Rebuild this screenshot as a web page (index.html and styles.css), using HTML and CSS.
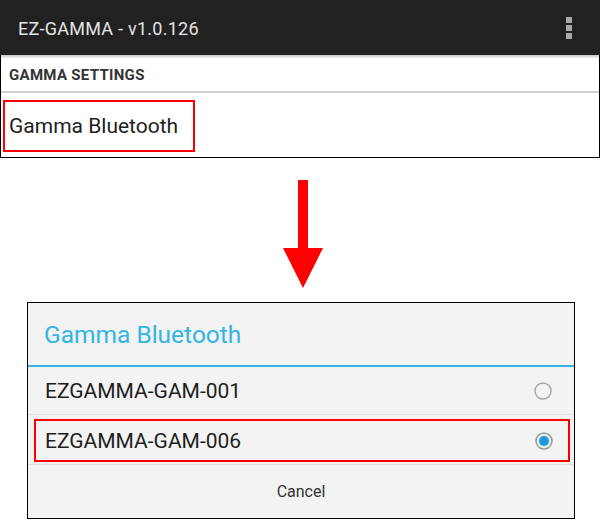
FILE: index.html
```html
<!DOCTYPE html>
<html>
<head>
<meta charset="utf-8">
<link rel="stylesheet" href="styles.css">
</head>
<body>
<div class="screen">
  <div class="appbar">
    <span class="app-title">EZ-GAMMA - v1.0.126</span>
    <span class="menu"><i></i><i></i><i></i></span>
  </div>
  <div class="shadow"></div>
  <div class="section">GAMMA SETTINGS</div>
  <div class="pref">
    <span class="hl pref-hl">Gamma Bluetooth</span>
  </div>
</div>

<div class="arrow-wrap">
  <svg class="arrow" width="40" height="108" viewBox="0 0 40 108">
    <rect x="15" y="0" width="10" height="69" fill="#ff0000"/>
    <polygon points="0,68 40,68 20,108" fill="#ff0000"/>
  </svg>
</div>

<div class="dialog">
  <div class="dlg-title">Gamma Bluetooth</div>
  <div class="dlg-rule"></div>
  <div class="row">
    <span class="row-text">EZGAMMA-GAM-001</span>
    <svg class="radio" width="18" height="18" viewBox="0 0 18 18">
      <circle cx="9" cy="9" r="8" fill="none" stroke="#a8a8a8" stroke-width="1.5"/>
    </svg>
  </div>
  <div class="row-div"></div>
  <div class="row2">
    <div class="hl row-hl">
      <span class="row-text">EZGAMMA-GAM-006</span>
      <svg class="radio" width="18" height="18" viewBox="0 0 18 18">
        <circle cx="9" cy="9" r="8" fill="#e4eef2" stroke="#9a9a9a" stroke-width="1.5"/>
        <circle cx="9" cy="9" r="5" fill="#1e98d6"/>
      </svg>
    </div>
  </div>
  <div class="row-div"></div>
  <div class="cancel">Cancel</div>
</div>
</body>
</html>
```

FILE: styles.css
```css
* { box-sizing: border-box; }
html, body {
  margin: 0;
  padding: 0;
  background: #ffffff;
  font-family: Roboto, "Noto Sans", "Liberation Sans", sans-serif;
}
body { width: 600px; height: 523px; overflow: hidden; }

.screen {
  width: 600px;
  height: 158px;
  border: 1px solid #000;
  border-top: none;
  display: flex;
  flex-direction: column;
}
.appbar {
  height: 55px;
  background: #212121;
  display: flex;
  align-items: center;
  justify-content: space-between;
  padding: 2px 28px 0 18px;
  margin: 0 -1px;
}
.app-title {
  color: #e4e4e4;
  font-size: 18px;
  letter-spacing: 0.25px;
}
.menu {
  display: flex;
  flex-direction: column;
  gap: 2px;
  margin-top: -1px;
}
.menu i {
  display: block;
  width: 6px;
  height: 6px;
  background: #a9a9a9;
}
.shadow {
  height: 3px;
  background: linear-gradient(#c4c4c4, #f4f4f4);
}
.section {
  height: 33px;
  display: flex;
  align-items: center;
  padding: 1px 0 0 8px;
  font-size: 15px;
  font-weight: bold;
  letter-spacing: 0.3px;
  color: #333;
}
.pref {
  border-top: 2px solid #d2d2d2;
  flex: 1;
  padding: 7px 0 0 2px;
}
.hl { border: 2px solid #ff0000; }
.pref-hl {
  display: flex;
  align-items: center;
  width: 192px;
  height: 52px;
  padding-left: 4px;
  font-size: 21px;
  color: #1e1e1e;
}

.arrow-wrap {
  height: 144px;
  padding: 22px 0 0 283px;
}
.arrow { display: block; }

.dialog {
  margin-left: 27px;
  width: 548px;
  height: 217px;
  border: 1px solid #000;
  background: #f3f3f3;
  display: flex;
  flex-direction: column;
}
.dlg-title {
  height: 62px;
  display: flex;
  align-items: center;
  padding: 1px 0 0 16px;
  font-size: 24.5px;
  color: #33b5e5;
}
.dlg-rule { height: 2px; background: #33b5e5; }
.row {
  height: 47px;
  display: flex;
  align-items: center;
  justify-content: space-between;
  padding: 0 22px 0 17px;
}
.row-text {
  font-size: 21px;
  color: #1e1e1e;
}
.radio { display: block; }
.row-div { height: 1px; background: #dedede; }
.row2 {
  height: 49px;
  padding: 4px 4px 2px 6px;
}
.row-hl {
  height: 43px;
  display: flex;
  align-items: center;
  justify-content: space-between;
  padding: 0 15px 0 9px;
}
.cancel {
  flex: 1;
  display: flex;
  align-items: center;
  justify-content: center;
  font-size: 16px;
  color: #333;
}
```
